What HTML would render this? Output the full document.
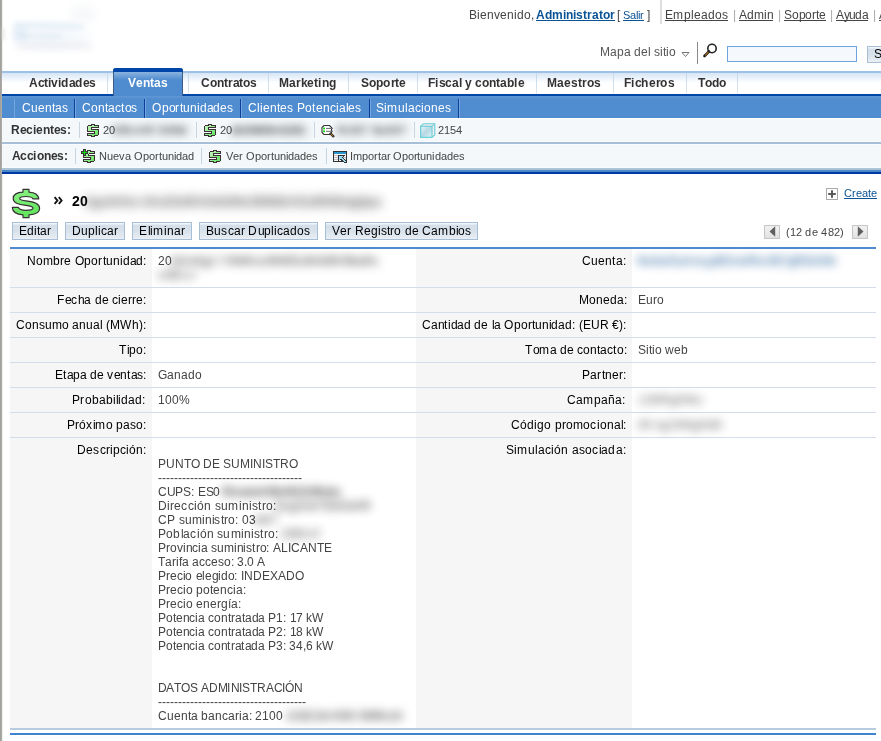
<!DOCTYPE html>
<html><head><meta charset="utf-8"><title>SugarCRM</title>
<style>
html,body{margin:0;padding:0;background:#fff;width:881px;height:741px;overflow:hidden;position:relative}
.t{position:absolute;will-change:transform;font-family:"Liberation Sans",sans-serif;line-height:20px;white-space:pre;font-kerning:none}
.t i{display:inline-block;font-style:normal}
.r{position:absolute}
</style></head><body>
<div class="r" style="left:0px;top:0px;width:1px;height:741px;background:#a2a19d"></div>
<div class="r" style="left:1px;top:0px;width:1px;height:741px;background:#acaba7"></div>
<div class="r" style="left:2px;top:0px;width:1px;height:741px;background:#eeeeec"></div>
<div class="r" style="left:2px;top:28px;width:3px;height:12px;background:rgba(225,225,222,0.6);filter:blur(1.5px)"></div>
<div class="r" style="left:12px;top:18px;width:84px;height:34px;background:radial-gradient(ellipse at 45% 50%, rgba(225,236,245,0.45), rgba(235,242,248,0.3) 55%, rgba(255,255,255,0) 72%);filter:blur(2px);"></div>
<div class="r" style="left:14px;top:23px;width:70px;height:5px;background:rgba(190,215,236,0.3);filter:blur(2.5px);border-radius:3px;transform:rotate(2deg)"></div>
<div class="r" style="left:13px;top:25px;width:14px;height:16px;background:rgba(185,212,234,0.3);filter:blur(3px);border-radius:5px"></div>
<div class="r" style="left:18px;top:34px;width:44px;height:4px;background:rgba(185,212,234,0.25);filter:blur(2.5px);border-radius:3px"></div>
<div class="r" style="left:16px;top:42px;width:76px;height:8px;background:rgba(222,226,232,0.4);filter:blur(3px);border-radius:4px"></div>
<div class="r" style="left:70px;top:6px;width:26px;height:16px;background:rgba(235,240,244,0.45);filter:blur(4px);border-radius:8px"></div>
<div class="t" style="left:469px;top:5px;font-size:12px;color:#444;"><i style="width:8px">B</i><i style="width:3px">i</i><i style="width:7px">e</i><i style="width:7px">n</i><i style="width:6px">v</i><i style="width:7px">e</i><i style="width:7px">n</i><i style="width:3px">i</i><i style="width:7px">d</i><i style="width:7px">o</i><i style="width:3px">,</i></div>
<div class="t" style="left:536px;top:5px;font-size:12px;color:#0b5394;font-weight:bold;"><i style="width:9px">A</i><i style="width:7px">d</i><i style="width:11px">m</i><i style="width:3px">i</i><i style="width:7px">n</i><i style="width:3px">i</i><i style="width:7px">s</i><i style="width:4px">t</i><i style="width:5px">r</i><i style="width:7px">a</i><i style="width:4px">t</i><i style="width:7px">o</i><i style="width:5px">r</i></div>
<div class="r" style="left:536px;top:20px;width:79px;height:1px;background:#0b5394"></div>
<div class="t" style="left:617px;top:5px;font-size:12px;color:#444;"><i style="width:3px">[</i></div>
<div class="t" style="left:623px;top:5px;font-size:11px;color:#0b5394;"><i style="width:7px">S</i><i style="width:6px">a</i><i style="width:2px">l</i><i style="width:2px">i</i><i style="width:4px">r</i></div>
<div class="r" style="left:623px;top:20px;width:21px;height:1px;background:#0b5394"></div>
<div class="t" style="left:647px;top:5px;font-size:12px;color:#444;"><i style="width:3px">]</i></div>
<div class="r" style="left:660px;top:0px;width:2px;height:24px;background:#dedede"></div>
<div class="t" style="left:665px;top:5px;font-size:12px;color:#444;"><i style="width:8px">E</i><i style="width:11px">m</i><i style="width:7px">p</i><i style="width:3px">l</i><i style="width:7px">e</i><i style="width:7px">a</i><i style="width:7px">d</i><i style="width:7px">o</i><i style="width:6px">s</i></div>
<div class="r" style="left:665px;top:20px;width:63px;height:1px;background:#444"></div>
<div class="t" style="left:733px;top:5px;font-size:12px;color:#aaa;"><i style="width:3px">|</i></div>
<div class="t" style="left:739px;top:5px;font-size:12px;color:#444;"><i style="width:8px">A</i><i style="width:7px">d</i><i style="width:10px">m</i><i style="width:3px">i</i><i style="width:6px">n</i></div>
<div class="r" style="left:739px;top:20px;width:34px;height:1px;background:#444"></div>
<div class="t" style="left:778px;top:5px;font-size:12px;color:#aaa;"><i style="width:3px">|</i></div>
<div class="t" style="left:784px;top:5px;font-size:12px;color:#444;"><i style="width:8px">S</i><i style="width:7px">o</i><i style="width:6px">p</i><i style="width:7px">o</i><i style="width:4px">r</i><i style="width:3px">t</i><i style="width:7px">e</i></div>
<div class="r" style="left:784px;top:20px;width:42px;height:1px;background:#444"></div>
<div class="t" style="left:830px;top:5px;font-size:12px;color:#aaa;"><i style="width:3px">|</i></div>
<div class="t" style="left:836px;top:5px;font-size:12px;color:#444;"><i style="width:8px">A</i><i style="width:5px">y</i><i style="width:6px">u</i><i style="width:7px">d</i><i style="width:6px">a</i></div>
<div class="r" style="left:836px;top:20px;width:32px;height:1px;background:#444"></div>
<div class="t" style="left:873px;top:5px;font-size:12px;color:#aaa;"><i style="width:3px">|</i></div>
<div class="t" style="left:879px;top:5px;font-size:12px;color:#444;"><i style="width:8px">A</i><i style="width:6px">c</i><i style="width:7px">e</i><i style="width:4px">r</i><i style="width:6px">c</i><i style="width:7px">a</i><i style="width:3px"> </i><i style="width:7px">d</i><i style="width:7px">e</i></div>
<div class="r" style="left:879px;top:20px;width:55px;height:1px;background:#444"></div>
<div class="t" style="left:600px;top:42px;font-size:12px;color:#555;"><i style="width:10px">M</i><i style="width:7px">a</i><i style="width:7px">p</i><i style="width:7px">a</i><i style="width:3px"> </i><i style="width:7px">d</i><i style="width:7px">e</i><i style="width:3px">l</i><i style="width:3px"> </i><i style="width:6px">s</i><i style="width:3px">i</i><i style="width:3px">t</i><i style="width:3px">i</i><i style="width:7px">o</i></div>
<svg class="r" style="left:681px;top:52px" width="9" height="6" viewBox="0 0 9 6"><path d="M1 0.5 L8 0.5 L4.5 4.5 Z" fill="#fff" stroke="#777" stroke-width="1"/></svg>
<div class="r" style="left:697px;top:42px;width:1px;height:22px;background:#888"></div>
<svg class="r" style="left:703px;top:43px" width="15" height="15" viewBox="0 0 15 15"><circle cx="9" cy="5.5" r="4.2" fill="#fff" stroke="#222" stroke-width="1.6"/><path d="M6 8.5 L1.5 13" stroke="#222" stroke-width="2.6" stroke-linecap="round"/><path d="M5.3 9.2 L2.2 12.3" stroke="#b07010" stroke-width="1.2"/></svg>
<div class="r" style="left:727px;top:46px;width:130px;height:16px;background:#f5f9fd;border:1px solid #6ea4dc;box-sizing:border-box;"></div>
<div class="r" style="left:867px;top:46px;width:20px;height:17px;background:linear-gradient(#f2f5f8 0px,#f2f5f8 1px,#d4dfea 2px,#d8e2ec 8px,#e6ecf2 14px,#f0f3f6 15px);border:1px solid #a6bed6;box-sizing:border-box;"></div>
<div class="t" style="left:874px;top:44px;font-size:12px;color:#000;"><i style="width:8px">S</i></div>
<div class="r" style="left:2px;top:71px;width:879px;height:2px;background:#9cc0e6"></div>
<div class="r" style="left:2px;top:73px;width:879px;height:21px;background:linear-gradient(#d6e5f5 0px,#ffffff 10px,#ffffff 21px)"></div>
<div class="r" style="left:2px;top:94px;width:879px;height:2px;background:#0046a8"></div>
<div class="r" style="left:107px;top:73px;width:1px;height:21px;background:linear-gradient(#c4d8ec,#dbe6f0)"></div>
<div class="r" style="left:188px;top:73px;width:1px;height:21px;background:linear-gradient(#c4d8ec,#dbe6f0)"></div>
<div class="r" style="left:268px;top:73px;width:1px;height:21px;background:linear-gradient(#c4d8ec,#dbe6f0)"></div>
<div class="r" style="left:348px;top:73px;width:1px;height:21px;background:linear-gradient(#c4d8ec,#dbe6f0)"></div>
<div class="r" style="left:417px;top:73px;width:1px;height:21px;background:linear-gradient(#c4d8ec,#dbe6f0)"></div>
<div class="r" style="left:536px;top:73px;width:1px;height:21px;background:linear-gradient(#c4d8ec,#dbe6f0)"></div>
<div class="r" style="left:613px;top:73px;width:1px;height:21px;background:linear-gradient(#c4d8ec,#dbe6f0)"></div>
<div class="r" style="left:686px;top:73px;width:1px;height:21px;background:linear-gradient(#c4d8ec,#dbe6f0)"></div>
<div class="r" style="left:737px;top:73px;width:1px;height:21px;background:linear-gradient(#c4d8ec,#dbe6f0)"></div>
<div class="r" style="left:113px;top:68px;width:70px;height:28px;background:#4f8ccf;border-left:1px solid #3c5d86;border-right:1px solid #3c5d86;border-top-left-radius:3px;border-top-right-radius:3px;box-sizing:border-box"></div>
<div class="r" style="left:113px;top:68px;width:70px;height:4px;background:#0046a8;border-top-left-radius:3px;border-top-right-radius:3px"></div>
<div class="r" style="left:114px;top:72px;width:68px;height:8px;background:linear-gradient(#8ab3e0,#4f8ccf)"></div>
<div class="t" style="left:29px;top:73px;font-size:12px;color:#333;font-weight:bold;"><i style="width:9px">A</i><i style="width:6px">c</i><i style="width:4px">t</i><i style="width:3px">i</i><i style="width:7px">v</i><i style="width:3px">i</i><i style="width:8px">d</i><i style="width:6px">a</i><i style="width:8px">d</i><i style="width:6px">e</i><i style="width:7px">s</i></div>
<div class="t" style="left:201px;top:73px;font-size:12px;color:#333;font-weight:bold;"><i style="width:9px">C</i><i style="width:7px">o</i><i style="width:7px">n</i><i style="width:4px">t</i><i style="width:5px">r</i><i style="width:6px">a</i><i style="width:4px">t</i><i style="width:7px">o</i><i style="width:7px">s</i></div>
<div class="t" style="left:279px;top:73px;font-size:12px;color:#333;font-weight:bold;"><i style="width:10px">M</i><i style="width:7px">a</i><i style="width:5px">r</i><i style="width:6px">k</i><i style="width:7px">e</i><i style="width:4px">t</i><i style="width:4px">i</i><i style="width:7px">n</i><i style="width:8px">g</i></div>
<div class="t" style="left:361px;top:73px;font-size:12px;color:#333;font-weight:bold;"><i style="width:8px">S</i><i style="width:7px">o</i><i style="width:7px">p</i><i style="width:8px">o</i><i style="width:4px">r</i><i style="width:4px">t</i><i style="width:7px">e</i></div>
<div class="t" style="left:428px;top:73px;font-size:12px;color:#333;font-weight:bold;"><i style="width:7px">F</i><i style="width:4px">i</i><i style="width:6px">s</i><i style="width:7px">c</i><i style="width:7px">a</i><i style="width:3px">l</i><i style="width:3px"> </i><i style="width:7px">y</i><i style="width:3px"> </i><i style="width:7px">c</i><i style="width:7px">o</i><i style="width:7px">n</i><i style="width:4px">t</i><i style="width:7px">a</i><i style="width:7px">b</i><i style="width:4px">l</i><i style="width:6px">e</i></div>
<div class="t" style="left:547px;top:73px;font-size:12px;color:#333;font-weight:bold;"><i style="width:10px">M</i><i style="width:7px">a</i><i style="width:7px">e</i><i style="width:7px">s</i><i style="width:4px">t</i><i style="width:5px">r</i><i style="width:7px">o</i><i style="width:7px">s</i></div>
<div class="t" style="left:624px;top:73px;font-size:12px;color:#333;font-weight:bold;"><i style="width:7px">F</i><i style="width:4px">i</i><i style="width:6px">c</i><i style="width:8px">h</i><i style="width:7px">e</i><i style="width:4px">r</i><i style="width:8px">o</i><i style="width:6px">s</i></div>
<div class="t" style="left:698px;top:73px;font-size:12px;color:#333;font-weight:bold;"><i style="width:7px">T</i><i style="width:7px">o</i><i style="width:7px">d</i><i style="width:7px">o</i></div>
<div class="t" style="left:128px;top:73px;font-size:12px;color:#fff;font-weight:bold;"><i style="width:8px">V</i><i style="width:7px">e</i><i style="width:7px">n</i><i style="width:4px">t</i><i style="width:7px">a</i><i style="width:7px">s</i></div>
<div class="r" style="left:2px;top:96px;width:879px;height:22px;background:linear-gradient(#6198d6 0px,#5590d2 2px,#4f8cd0 4px,#4f8cd0 21px,#4a88ce 22px)"></div>
<div class="r" style="left:74px;top:99px;width:1px;height:20px;background:#0a3f9c"></div>
<div class="r" style="left:75px;top:99px;width:1px;height:19px;background:#76a6dc"></div>
<div class="r" style="left:144px;top:99px;width:1px;height:20px;background:#0a3f9c"></div>
<div class="r" style="left:145px;top:99px;width:1px;height:19px;background:#76a6dc"></div>
<div class="r" style="left:240px;top:99px;width:1px;height:20px;background:#0a3f9c"></div>
<div class="r" style="left:241px;top:99px;width:1px;height:19px;background:#76a6dc"></div>
<div class="r" style="left:369px;top:99px;width:1px;height:20px;background:#0a3f9c"></div>
<div class="r" style="left:370px;top:99px;width:1px;height:19px;background:#76a6dc"></div>
<div class="r" style="left:458px;top:99px;width:1px;height:20px;background:#0a3f9c"></div>
<div class="r" style="left:459px;top:99px;width:1px;height:19px;background:#76a6dc"></div>
<div class="r" style="left:14px;top:99px;width:1px;height:20px;background:#76a6dc"></div>
<div class="t" style="left:22px;top:98px;font-size:12px;color:#fff;"><i style="width:9px">C</i><i style="width:7px">u</i><i style="width:7px">e</i><i style="width:7px">n</i><i style="width:3px">t</i><i style="width:7px">a</i><i style="width:6px">s</i></div>
<div class="t" style="left:82px;top:98px;font-size:12px;color:#fff;"><i style="width:9px">C</i><i style="width:7px">o</i><i style="width:7px">n</i><i style="width:3px">t</i><i style="width:7px">a</i><i style="width:6px">c</i><i style="width:4px">t</i><i style="width:6px">o</i><i style="width:7px">s</i></div>
<div class="t" style="left:152px;top:98px;font-size:12px;color:#fff;"><i style="width:10px">O</i><i style="width:7px">p</i><i style="width:6px">o</i><i style="width:5px">r</i><i style="width:3px">t</i><i style="width:7px">u</i><i style="width:7px">n</i><i style="width:3px">i</i><i style="width:7px">d</i><i style="width:6px">a</i><i style="width:7px">d</i><i style="width:7px">e</i><i style="width:7px">s</i></div>
<div class="t" style="left:248px;top:98px;font-size:12px;color:#fff;"><i style="width:9px">C</i><i style="width:3px">l</i><i style="width:3px">i</i><i style="width:7px">e</i><i style="width:7px">n</i><i style="width:3px">t</i><i style="width:7px">e</i><i style="width:6px">s</i><i style="width:4px"> </i><i style="width:8px">P</i><i style="width:7px">o</i><i style="width:4px">t</i><i style="width:7px">e</i><i style="width:7px">n</i><i style="width:6px">c</i><i style="width:3px">i</i><i style="width:7px">a</i><i style="width:2px">l</i><i style="width:7px">e</i><i style="width:7px">s</i></div>
<div class="t" style="left:376px;top:98px;font-size:12px;color:#fff;"><i style="width:8px">S</i><i style="width:3px">i</i><i style="width:11px">m</i><i style="width:7px">u</i><i style="width:3px">l</i><i style="width:7px">a</i><i style="width:6px">c</i><i style="width:3px">i</i><i style="width:7px">o</i><i style="width:7px">n</i><i style="width:7px">e</i><i style="width:6px">s</i></div>
<div class="r" style="left:2px;top:118px;width:879px;height:1px;background:#ffffff"></div>
<div class="r" style="left:2px;top:119px;width:879px;height:23px;background:#f4f8fb"></div>
<div class="r" style="left:2px;top:141px;width:879px;height:1px;background:#f9fbfd"></div>
<div class="r" style="left:2px;top:142px;width:879px;height:2px;background:#a6bfd6"></div>
<div class="r" style="left:2px;top:144px;width:879px;height:1px;background:#f9fbfd"></div>
<div class="r" style="left:2px;top:145px;width:879px;height:23px;background:#f4f8fb"></div>
<div class="r" style="left:2px;top:167px;width:879px;height:1px;background:#f8fafc"></div>
<div class="r" style="left:2px;top:168px;width:879px;height:2px;background:#adc3d6"></div>
<div class="r" style="left:2px;top:170px;width:879px;height:2px;background:#4a88cc"></div>
<div class="r" style="left:2px;top:172px;width:879px;height:2px;background:#0037a2"></div>
<div class="t" style="left:11px;top:120px;font-size:12px;color:#333;font-weight:bold;"><i style="width:9px">R</i><i style="width:6px">e</i><i style="width:7px">c</i><i style="width:3px">i</i><i style="width:7px">e</i><i style="width:7px">n</i><i style="width:4px">t</i><i style="width:6px">e</i><i style="width:7px">s</i><i style="width:4px">:</i></div>
<div class="t" style="left:12px;top:146px;font-size:12px;color:#333;font-weight:bold;"><i style="width:8px">A</i><i style="width:7px">c</i><i style="width:6px">c</i><i style="width:4px">i</i><i style="width:7px">o</i><i style="width:7px">n</i><i style="width:6px">e</i><i style="width:7px">s</i><i style="width:3px">:</i></div>
<div class="r" style="left:79px;top:122px;width:1px;height:16px;background:#c8d6e4"></div>
<div class="r" style="left:196px;top:122px;width:1px;height:16px;background:#c8d6e4"></div>
<div class="r" style="left:314px;top:122px;width:1px;height:16px;background:#c8d6e4"></div>
<div class="r" style="left:414px;top:122px;width:1px;height:16px;background:#c8d6e4"></div>
<div class="r" style="left:75px;top:148px;width:1px;height:16px;background:#c8d6e4"></div>
<div class="r" style="left:201px;top:148px;width:1px;height:16px;background:#c8d6e4"></div>
<div class="r" style="left:326px;top:148px;width:1px;height:16px;background:#c8d6e4"></div>
<svg class="r" style="left:87px;top:124px" width="12" height="13" viewBox="0 0 12 13" shape-rendering="crispEdges"><defs><linearGradient id="pg1" x1="0" y1="0" x2="1" y2="1" gradientUnits="userSpaceOnUse" gradientTransform="scale(12,13)"><stop offset="0" stop-color="#d2f6cb"/><stop offset="0.55" stop-color="#8cee86"/><stop offset="1" stop-color="#55dc50"/></linearGradient></defs><path d="M4 0h4v1h-4zM1 1h4v1h-4zM7 1h5v1h-5zM0 2h1v1h-1zM11 2h1v1h-1zM0 3h1v1h-1zM4 3h8v1h-8zM0 4h1v1h-1zM4 4h1v1h-1zM0 5h1v1h-1zM4 5h8v1h-8zM0 6h1v1h-1zM11 6h1v1h-1zM0 7h8v1h-8zM11 7h1v1h-1zM7 8h1v1h-1zM11 8h1v1h-1zM0 9h8v1h-8zM11 9h1v1h-1zM0 10h1v1h-1zM11 10h1v1h-1zM0 11h5v1h-5zM7 11h4v1h-4zM4 12h4v1h-4z" fill="#3b2f38"/><path d="M5 1h2v1h-2zM1 2h10v1h-10zM1 3h3v1h-3zM1 4h3v1h-3zM1 5h3v1h-3zM1 6h10v1h-10zM8 7h3v1h-3zM8 8h3v1h-3zM8 9h3v1h-3zM1 10h10v1h-10zM5 11h2v1h-2z" fill="url(#pg1)"/></svg>
<div class="t" style="left:103px;top:120px;font-size:11px;color:#444;"><i style="width:6px">2</i><i style="width:6px">0</i></div>
<div class="t" style="left:113px;top:120px;font-size:11px;color:#222;font-weight:bold;filter:blur(4.4px);opacity:0.85;"><i style="width:7px">6</i><i style="width:4px">f</i><i style="width:7px">6</i><i style="width:7px">c</i><i style="width:8px">h</i><i style="width:9px">R</i><i style="width:3px"> </i><i style="width:9px">S</i><i style="width:7px">8</i><i style="width:6px">9</i><i style="width:8px">d</i></div>
<svg class="r" style="left:204px;top:124px" width="12" height="13" viewBox="0 0 12 13" shape-rendering="crispEdges"><defs><linearGradient id="pg2" x1="0" y1="0" x2="1" y2="1" gradientUnits="userSpaceOnUse" gradientTransform="scale(12,13)"><stop offset="0" stop-color="#d2f6cb"/><stop offset="0.55" stop-color="#8cee86"/><stop offset="1" stop-color="#55dc50"/></linearGradient></defs><path d="M4 0h4v1h-4zM1 1h4v1h-4zM7 1h5v1h-5zM0 2h1v1h-1zM11 2h1v1h-1zM0 3h1v1h-1zM4 3h8v1h-8zM0 4h1v1h-1zM4 4h1v1h-1zM0 5h1v1h-1zM4 5h8v1h-8zM0 6h1v1h-1zM11 6h1v1h-1zM0 7h8v1h-8zM11 7h1v1h-1zM7 8h1v1h-1zM11 8h1v1h-1zM0 9h8v1h-8zM11 9h1v1h-1zM0 10h1v1h-1zM11 10h1v1h-1zM0 11h5v1h-5zM7 11h4v1h-4zM4 12h4v1h-4z" fill="#3b2f38"/><path d="M5 1h2v1h-2zM1 2h10v1h-10zM1 3h3v1h-3zM1 4h3v1h-3zM1 5h3v1h-3zM1 6h10v1h-10zM8 7h3v1h-3zM8 8h3v1h-3zM8 9h3v1h-3zM1 10h10v1h-10zM5 11h2v1h-2z" fill="url(#pg2)"/></svg>
<div class="t" style="left:220px;top:120px;font-size:11px;color:#444;"><i style="width:6px">2</i><i style="width:6px">0</i></div>
<div class="t" style="left:231px;top:120px;font-size:11px;color:#222;font-weight:bold;filter:blur(4.4px);opacity:0.85;"><i style="width:6px">d</i><i style="width:7px">b</i><i style="width:6px">5</i><i style="width:7px">N</i><i style="width:6px">6</i><i style="width:7px">N</i><i style="width:7px">h</i><i style="width:6px">4</i><i style="width:5px">1</i><i style="width:6px">2</i><i style="width:6px">8</i><i style="width:6px">1</i></div>
<svg class="r" style="left:321px;top:124px" width="15" height="14" viewBox="0 0 15 14">
<path d="M3 1.5 L8.5 1.5 L10.5 3.5 L10.5 8.5 L8.5 10.5 L3 10.5 L1 8.5 L1 3.5 Z" fill="#fff" stroke="#333" stroke-width="1.1"/>
<rect x="2.2" y="3.6" width="1.8" height="1.8" fill="#0d0"/><rect x="2.2" y="6.4" width="1.8" height="1.8" fill="#0d0"/>
<rect x="5" y="3.9" width="7" height="1.1" fill="#777"/><rect x="5" y="6.8" width="7" height="1.1" fill="#777"/>
<path d="M9 9 L13 13" stroke="#222" stroke-width="2.4"/><path d="M9.6 9.6 L12.4 12.4" stroke="#c8860a" stroke-width="1"/>
</svg>
<div class="t" style="left:337px;top:120px;font-size:11px;color:#222;font-weight:bold;filter:blur(4.4px);opacity:0.85;"><i style="width:4px">f</i><i style="width:8px">h</i><i style="width:6px">3</i><i style="width:7px">3</i><i style="width:7px">7</i><i style="width:4px"> </i><i style="width:6px">8</i><i style="width:7px">s</i><i style="width:7px">6</i><i style="width:7px">9</i><i style="width:7px">7</i></div>
<svg class="r" style="left:420px;top:123px" width="16" height="15" viewBox="0 0 16 15">
<defs><linearGradient id="gc" x1="0" y1="0" x2="1" y2="1"><stop offset="0" stop-color="#e8f6fb"/><stop offset="0.5" stop-color="#b6d8e4"/><stop offset="1" stop-color="#e2f4f8"/></linearGradient></defs>
<path d="M3.5 0.7 L14.8 0.7 L14.8 12 L12 14.3 L0.7 14.3 L0.7 3.3 Z" fill="#f2e8ee" stroke="#66d0d8" stroke-width="1.1"/>
<rect x="0.7" y="3.3" width="11.3" height="11" fill="url(#gc)" stroke="#66d0d8" stroke-width="1.1"/>
<path d="M12 3.3 L14.8 0.7" stroke="#66d0d8" stroke-width="1"/>
</svg>
<div class="t" style="left:438px;top:120px;font-size:11px;color:#444;"><i style="width:6px">2</i><i style="width:6px">1</i><i style="width:6px">5</i><i style="width:6px">4</i></div>
<svg class="r" style="left:80px;top:148px" width="15" height="15" viewBox="0 0 15 15" shape-rendering="crispEdges"><defs><linearGradient id="pg3" x1="0" y1="0" x2="1" y2="1" gradientUnits="userSpaceOnUse" gradientTransform="scale(15,15)"><stop offset="0" stop-color="#d8f8d0"/><stop offset="0.55" stop-color="#98f090"/><stop offset="1" stop-color="#5cde56"/></linearGradient></defs><path d="M3 1h3v1h-3zM3 2h1v1h-1zM5 2h1v1h-1zM7 2h4v1h-4zM1 3h3v1h-3zM5 3h3v1h-3zM10 3h5v1h-5zM1 4h1v1h-1zM7 4h1v1h-1zM14 4h1v1h-1zM1 5h3v1h-3zM5 5h3v1h-3zM9 5h6v1h-6zM3 6h1v1h-1zM5 6h1v1h-1zM8 6h1v1h-1zM3 7h3v1h-3zM8 7h7v1h-7zM3 8h1v1h-1zM14 8h1v1h-1zM3 9h8v1h-8zM14 9h1v1h-1zM10 10h1v1h-1zM14 10h1v1h-1zM3 11h8v1h-8zM14 11h1v1h-1zM3 12h1v1h-1zM14 12h1v1h-1zM3 13h5v1h-5zM10 13h4v1h-4zM7 14h4v1h-4z" fill="#3b2f38"/><path d="M8 3h2v1h-2zM8 4h6v1h-6zM8 5h1v1h-1zM6 6h2v1h-2zM6 7h2v1h-2zM4 8h10v1h-10zM11 9h3v1h-3zM11 10h3v1h-3zM11 11h3v1h-3zM4 12h10v1h-10zM8 13h2v1h-2z" fill="url(#pg3)"/><path d="M4 2h1v1h-1zM4 3h1v1h-1zM2 4h5v1h-5zM4 5h1v1h-1zM4 6h1v1h-1z" fill="#10e010"/></svg>
<div class="t" style="left:99px;top:146px;font-size:11px;color:#444;"><i style="width:8px">N</i><i style="width:6px">u</i><i style="width:6px">e</i><i style="width:6px">v</i><i style="width:6px">a</i><i style="width:3px"> </i><i style="width:9px">O</i><i style="width:6px">p</i><i style="width:6px">o</i><i style="width:4px">r</i><i style="width:3px">t</i><i style="width:6px">u</i><i style="width:6px">n</i><i style="width:2px">i</i><i style="width:6px">d</i><i style="width:6px">a</i><i style="width:6px">d</i></div>
<svg class="r" style="left:209px;top:150px" width="12" height="13" viewBox="0 0 12 13" shape-rendering="crispEdges"><defs><linearGradient id="pg4" x1="0" y1="0" x2="1" y2="1" gradientUnits="userSpaceOnUse" gradientTransform="scale(12,13)"><stop offset="0" stop-color="#d2f6cb"/><stop offset="0.55" stop-color="#8cee86"/><stop offset="1" stop-color="#55dc50"/></linearGradient></defs><path d="M4 0h4v1h-4zM1 1h4v1h-4zM7 1h5v1h-5zM0 2h1v1h-1zM11 2h1v1h-1zM0 3h1v1h-1zM4 3h8v1h-8zM0 4h1v1h-1zM4 4h1v1h-1zM0 5h1v1h-1zM4 5h8v1h-8zM0 6h1v1h-1zM11 6h1v1h-1zM0 7h8v1h-8zM11 7h1v1h-1zM7 8h1v1h-1zM11 8h1v1h-1zM0 9h8v1h-8zM11 9h1v1h-1zM0 10h1v1h-1zM11 10h1v1h-1zM0 11h5v1h-5zM7 11h4v1h-4zM4 12h4v1h-4z" fill="#3b2f38"/><path d="M5 1h2v1h-2zM1 2h10v1h-10zM1 3h3v1h-3zM1 4h3v1h-3zM1 5h3v1h-3zM1 6h10v1h-10zM8 7h3v1h-3zM8 8h3v1h-3zM8 9h3v1h-3zM1 10h10v1h-10zM5 11h2v1h-2z" fill="url(#pg4)"/></svg>
<div class="t" style="left:226px;top:146px;font-size:11px;color:#444;"><i style="width:7px">V</i><i style="width:6px">e</i><i style="width:4px">r</i><i style="width:3px"> </i><i style="width:9px">O</i><i style="width:6px">p</i><i style="width:6px">o</i><i style="width:4px">r</i><i style="width:3px">t</i><i style="width:6px">u</i><i style="width:6px">n</i><i style="width:2px">i</i><i style="width:6px">d</i><i style="width:6px">a</i><i style="width:6px">d</i><i style="width:6px">e</i><i style="width:6px">s</i></div>
<svg class="r" style="left:333px;top:151px" width="14" height="12" viewBox="0 0 14 12" shape-rendering="crispEdges"><path d="M0 0h14v1h-14zM0 1h1v1h-1zM13 1h1v1h-1zM0 2h1v1h-1zM13 2h1v1h-1zM0 3h1v1h-1zM13 3h1v1h-1zM0 4h1v1h-1zM5 4h7v1h-7zM13 4h1v1h-1zM0 5h1v1h-1zM5 5h1v1h-1zM10 5h1v1h-1zM13 5h1v1h-1zM0 6h1v1h-1zM5 6h1v1h-1zM9 6h1v1h-1zM13 6h1v1h-1zM0 7h1v1h-1zM5 7h1v1h-1zM10 7h1v1h-1zM13 7h1v1h-1zM0 8h1v1h-1zM5 8h1v1h-1zM7 8h2v1h-2zM11 8h1v1h-1zM13 8h1v1h-1zM0 9h1v1h-1zM5 9h1v1h-1zM8 9h2v1h-2zM12 9h2v1h-2zM0 10h11v1h-11zM13 10h1v1h-1zM11 11h3v1h-3z" fill="#333333"/><path d="M1 1h12v1h-12zM1 2h12v1h-12z" fill="#2a98cc"/><path d="M1 3h12v1h-12zM12 4h1v1h-1zM1 5h4v1h-4zM11 5h2v1h-2zM1 7h4v1h-4zM11 7h2v1h-2zM1 9h4v1h-4zM6 9h2v1h-2z" fill="#f6f1f3"/><path d="M1 4h4v1h-4zM1 6h4v1h-4zM10 6h3v1h-3zM1 8h4v1h-4zM12 8h1v1h-1z" fill="#c4c4c4"/><path d="M6 5h4v1h-4zM6 6h3v1h-3zM6 7h4v1h-4zM6 8h1v1h-1zM9 8h2v1h-2zM10 9h2v1h-2zM11 10h2v1h-2z" fill="#9adcf4"/></svg>
<div class="t" style="left:350px;top:146px;font-size:11px;color:#444;"><i style="width:3px">I</i><i style="width:9px">m</i><i style="width:6px">p</i><i style="width:6px">o</i><i style="width:4px">r</i><i style="width:3px">t</i><i style="width:6px">a</i><i style="width:3px">r</i><i style="width:3px"> </i><i style="width:9px">O</i><i style="width:6px">p</i><i style="width:6px">o</i><i style="width:3px">r</i><i style="width:3px">t</i><i style="width:6px">u</i><i style="width:6px">n</i><i style="width:3px">i</i><i style="width:6px">d</i><i style="width:6px">a</i><i style="width:6px">d</i><i style="width:6px">e</i><i style="width:5px">s</i></div>
<svg class="r" style="left:11px;top:188px" width="30" height="31" viewBox="-1 -1 30 31">
<defs><linearGradient id="gb" x1="0" y1="0" x2="0.3" y2="1"><stop offset="0" stop-color="#8cf286"/><stop offset="1" stop-color="#62e45c"/></linearGradient></defs>
<path d="M26.8 9.8 H20.9 C20.3 8.3 18 7.5 14 7.5 C10 7.5 7.7 8.2 7.7 9.6 C7.7 11 9.5 11.5 14 11.9 C22.5 12.7 27.6 14.4 27.6 19.4 C27.6 23.6 23 25.5 17 25.8 V28.6 H11 V25.8 C4.8 25.5 0.6 23.2 0.3 18.4 H6.4 C7 20.5 9.5 21.3 14 21.3 C18.5 21.3 21 20.6 21 19 C21 17.4 18.5 16.8 14 16.3 C5.5 15.5 1.2 13.5 1.2 9.4 C1.2 5.4 5 3.4 11 3.1 V0.4 H17 V3.1 C22.5 3.4 26.2 5.2 26.8 9.8 Z" fill="url(#gb)" stroke="#363036" stroke-width="1.2" stroke-linejoin="round"/>
</svg>
<svg class="r" style="left:53px;top:196px" width="11" height="9" viewBox="0 0 11 9"><path d="M1.6 1.2 L4.4 4.5 L1.6 7.8 M5.8 1.2 L8.6 4.5 L5.8 7.8" fill="none" stroke="#111" stroke-width="1.9"/></svg>
<div class="t" style="left:72px;top:191px;font-size:14px;color:#000;font-weight:bold;"><i style="width:8px">2</i><i style="width:7px">0</i></div>
<div class="t" style="left:84px;top:192px;font-size:13px;color:#333;font-weight:bold;filter:blur(5.5px);opacity:0.85;"><i style="width:9px">S</i><i style="width:8px">g</i><i style="width:7px">c</i><i style="width:4px">f</i><i style="width:8px">e</i><i style="width:4px">f</i><i style="width:8px">n</i><i style="width:8px">e</i><i style="width:3px"> </i><i style="width:8px">b</i><i style="width:5px">f</i><i style="width:8px">u</i><i style="width:7px">2</i><i style="width:9px">S</i><i style="width:8px">d</i><i style="width:4px">f</i><i style="width:10px">A</i><i style="width:7px">0</i><i style="width:7px">s</i><i style="width:10px">N</i><i style="width:7px">2</i><i style="width:9px">N</i><i style="width:8px">s</i><i style="width:7px">5</i><i style="width:7px">5</i><i style="width:8px">9</i><i style="width:7px">8</i><i style="width:7px">2</i><i style="width:5px">r</i><i style="width:5px">t</i><i style="width:7px">5</i><i style="width:7px">1</i><i style="width:8px">d</i><i style="width:10px">R</i><i style="width:7px">6</i><i style="width:8px">9</i><i style="width:8px">d</i><i style="width:8px">g</i><i style="width:7px">5</i><i style="width:8px">p</i><i style="width:7px">a</i></div>
<svg class="r" style="left:826px;top:188px" width="12" height="12" viewBox="0 0 12 12">
<rect x="0.5" y="0.5" width="11" height="11" fill="#fdfdfd" stroke="#aaa" stroke-width="1"/>
<path d="M6 2.2V9.8M2.2 6H9.8" stroke="#5a5a5a" stroke-width="2"/>
</svg>
<div class="t" style="left:844px;top:183px;font-size:11px;color:#0b5394;"><i style="width:8px">C</i><i style="width:4px">r</i><i style="width:6px">e</i><i style="width:6px">a</i><i style="width:3px">t</i><i style="width:6px">e</i></div>
<div class="r" style="left:844px;top:198px;width:33px;height:1px;background:#0b5394"></div>
<div class="r" style="left:12px;top:222px;width:46px;height:18px;background:linear-gradient(#f2f5f8 0px,#f2f5f8 1px,#d4dfea 2px,#d8e2ec 8px,#e6ecf2 15px,#f0f3f6 16px);border:1px solid #a6bed6;box-sizing:border-box;"></div>
<div class="t" style="left:19px;top:221px;font-size:12px;color:#000;"><i style="width:8px">E</i><i style="width:7px">d</i><i style="width:3px">i</i><i style="width:3px">t</i><i style="width:7px">a</i><i style="width:4px">r</i></div>
<div class="r" style="left:65px;top:222px;width:60px;height:18px;background:linear-gradient(#f2f5f8 0px,#f2f5f8 1px,#d4dfea 2px,#d8e2ec 8px,#e6ecf2 15px,#f0f3f6 16px);border:1px solid #a6bed6;box-sizing:border-box;"></div>
<div class="t" style="left:72px;top:221px;font-size:12px;color:#000;"><i style="width:9px">D</i><i style="width:7px">u</i><i style="width:7px">p</i><i style="width:3px">l</i><i style="width:3px">i</i><i style="width:6px">c</i><i style="width:7px">a</i><i style="width:4px">r</i></div>
<div class="r" style="left:132px;top:222px;width:60px;height:18px;background:linear-gradient(#f2f5f8 0px,#f2f5f8 1px,#d4dfea 2px,#d8e2ec 8px,#e6ecf2 15px,#f0f3f6 16px);border:1px solid #a6bed6;box-sizing:border-box;"></div>
<div class="t" style="left:139px;top:221px;font-size:12px;color:#000;"><i style="width:9px">E</i><i style="width:2px">l</i><i style="width:3px">i</i><i style="width:11px">m</i><i style="width:3px">i</i><i style="width:7px">n</i><i style="width:7px">a</i><i style="width:4px">r</i></div>
<div class="r" style="left:199px;top:222px;width:119px;height:18px;background:linear-gradient(#f2f5f8 0px,#f2f5f8 1px,#d4dfea 2px,#d8e2ec 8px,#e6ecf2 15px,#f0f3f6 16px);border:1px solid #a6bed6;box-sizing:border-box;"></div>
<div class="t" style="left:206px;top:221px;font-size:12px;color:#000;"><i style="width:8px">B</i><i style="width:7px">u</i><i style="width:7px">s</i><i style="width:6px">c</i><i style="width:7px">a</i><i style="width:4px">r</i><i style="width:3px"> </i><i style="width:10px">D</i><i style="width:6px">u</i><i style="width:7px">p</i><i style="width:3px">l</i><i style="width:3px">i</i><i style="width:6px">c</i><i style="width:7px">a</i><i style="width:7px">d</i><i style="width:7px">o</i><i style="width:6px">s</i></div>
<div class="r" style="left:325px;top:222px;width:153px;height:18px;background:linear-gradient(#f2f5f8 0px,#f2f5f8 1px,#d4dfea 2px,#d8e2ec 8px,#e6ecf2 15px,#f0f3f6 16px);border:1px solid #a6bed6;box-sizing:border-box;"></div>
<div class="t" style="left:332px;top:221px;font-size:12px;color:#000;"><i style="width:8px">V</i><i style="width:7px">e</i><i style="width:4px">r</i><i style="width:4px"> </i><i style="width:9px">R</i><i style="width:7px">e</i><i style="width:7px">g</i><i style="width:3px">i</i><i style="width:6px">s</i><i style="width:3px">t</i><i style="width:4px">r</i><i style="width:7px">o</i><i style="width:4px"> </i><i style="width:7px">d</i><i style="width:7px">e</i><i style="width:3px"> </i><i style="width:9px">C</i><i style="width:7px">a</i><i style="width:11px">m</i><i style="width:7px">b</i><i style="width:2px">i</i><i style="width:7px">o</i><i style="width:6px">s</i></div>
<div class="r" style="left:764px;top:225px;width:16px;height:14px;background:linear-gradient(#f2f2f2,#e2e2e2);border:1px solid #c6c6c6;box-sizing:border-box"></div>
<svg class="r" style="left:769px;top:226px" width="7" height="11" viewBox="0 0 7 11"><path d="M6.2 0.3 V10.7 L0.5 5.5 Z" fill="#606060"/></svg>
<div class="t" style="left:786px;top:222px;font-size:11px;color:#444;"><i style="width:4px">(</i><i style="width:6px">1</i><i style="width:6px">2</i><i style="width:3px"> </i><i style="width:7px">d</i><i style="width:6px">e</i><i style="width:3px"> </i><i style="width:7px">4</i><i style="width:6px">8</i><i style="width:6px">2</i><i style="width:4px">)</i></div>
<div class="r" style="left:852px;top:225px;width:16px;height:14px;background:linear-gradient(#f2f2f2,#e2e2e2);border:1px solid #c6c6c6;box-sizing:border-box"></div>
<svg class="r" style="left:857px;top:226px" width="7" height="11" viewBox="0 0 7 11"><path d="M0.8 0.3 V10.7 L6.5 5.5 Z" fill="#606060"/></svg>
<div class="r" style="left:10px;top:247px;width:866px;height:2px;background:#4f8ad0"></div>
<div class="r" style="left:10px;top:249px;width:142px;height:38px;background:#f6f6f6"></div>
<div class="r" style="left:416px;top:249px;width:216px;height:38px;background:#f6f6f6"></div>
<div class="t" style="left:27px;top:251px;font-size:12px;color:#000;"><i style="width:9px">N</i><i style="width:7px">o</i><i style="width:10px">m</i><i style="width:7px">b</i><i style="width:4px">r</i><i style="width:7px">e</i><i style="width:4px"> </i><i style="width:9px">O</i><i style="width:7px">p</i><i style="width:7px">o</i><i style="width:5px">r</i><i style="width:3px">t</i><i style="width:7px">u</i><i style="width:7px">n</i><i style="width:3px">i</i><i style="width:7px">d</i><i style="width:6px">a</i><i style="width:7px">d</i><i style="width:4px">:</i></div>
<div class="t" style="left:582px;top:251px;font-size:12px;color:#000;"><i style="width:9px">C</i><i style="width:7px">u</i><i style="width:7px">e</i><i style="width:7px">n</i><i style="width:4px">t</i><i style="width:7px">a</i><i style="width:3px">:</i></div>
<div class="r" style="left:10px;top:287px;width:866px;height:1px;background:#d3deea"></div>
<div class="r" style="left:10px;top:288px;width:142px;height:24px;background:#f6f6f6"></div>
<div class="r" style="left:416px;top:288px;width:216px;height:24px;background:#f6f6f6"></div>
<div class="t" style="left:57px;top:290px;font-size:12px;color:#000;"><i style="width:8px">F</i><i style="width:6px">e</i><i style="width:7px">c</i><i style="width:6px">h</i><i style="width:7px">a</i><i style="width:4px"> </i><i style="width:7px">d</i><i style="width:6px">e</i><i style="width:4px"> </i><i style="width:6px">c</i><i style="width:3px">i</i><i style="width:7px">e</i><i style="width:4px">r</i><i style="width:4px">r</i><i style="width:7px">e</i><i style="width:3px">:</i></div>
<div class="t" style="left:579px;top:290px;font-size:12px;color:#000;"><i style="width:10px">M</i><i style="width:7px">o</i><i style="width:7px">n</i><i style="width:7px">e</i><i style="width:7px">d</i><i style="width:7px">a</i><i style="width:3px">:</i></div>
<div class="t" style="left:638px;top:290px;font-size:12px;color:#444;"><i style="width:8px">E</i><i style="width:7px">u</i><i style="width:4px">r</i><i style="width:7px">o</i></div>
<div class="r" style="left:10px;top:312px;width:866px;height:1px;background:#d3deea"></div>
<div class="r" style="left:10px;top:313px;width:142px;height:24px;background:#f6f6f6"></div>
<div class="r" style="left:416px;top:313px;width:216px;height:24px;background:#f6f6f6"></div>
<div class="t" style="left:16px;top:315px;font-size:12px;color:#000;"><i style="width:9px">C</i><i style="width:7px">o</i><i style="width:7px">n</i><i style="width:6px">s</i><i style="width:7px">u</i><i style="width:10px">m</i><i style="width:7px">o</i><i style="width:3px"> </i><i style="width:7px">a</i><i style="width:7px">n</i><i style="width:7px">u</i><i style="width:7px">a</i><i style="width:2px">l</i><i style="width:4px"> </i><i style="width:4px">(</i><i style="width:10px">M</i><i style="width:12px">W</i><i style="width:7px">h</i><i style="width:4px">)</i><i style="width:3px">:</i></div>
<div class="t" style="left:422px;top:315px;font-size:12px;color:#000;"><i style="width:9px">C</i><i style="width:7px">a</i><i style="width:6px">n</i><i style="width:4px">t</i><i style="width:3px">i</i><i style="width:6px">d</i><i style="width:7px">a</i><i style="width:7px">d</i><i style="width:3px"> </i><i style="width:7px">d</i><i style="width:7px">e</i><i style="width:4px"> </i><i style="width:2px">l</i><i style="width:7px">a</i><i style="width:3px"> </i><i style="width:10px">O</i><i style="width:7px">p</i><i style="width:7px">o</i><i style="width:4px">r</i><i style="width:3px">t</i><i style="width:7px">u</i><i style="width:7px">n</i><i style="width:2px">i</i><i style="width:7px">d</i><i style="width:7px">a</i><i style="width:7px">d</i><i style="width:3px">:</i><i style="width:4px"> </i><i style="width:4px">(</i><i style="width:8px">E</i><i style="width:9px">U</i><i style="width:9px">R</i><i style="width:3px"> </i><i style="width:7px">€</i><i style="width:4px">)</i><i style="width:3px">:</i></div>
<div class="r" style="left:10px;top:337px;width:866px;height:1px;background:#d3deea"></div>
<div class="r" style="left:10px;top:338px;width:142px;height:24px;background:#f6f6f6"></div>
<div class="r" style="left:416px;top:338px;width:216px;height:24px;background:#f6f6f6"></div>
<div class="t" style="left:119px;top:340px;font-size:12px;color:#000;"><i style="width:8px">T</i><i style="width:2px">i</i><i style="width:7px">p</i><i style="width:7px">o</i><i style="width:3px">:</i></div>
<div class="t" style="left:525px;top:340px;font-size:12px;color:#000;"><i style="width:8px">T</i><i style="width:6px">o</i><i style="width:11px">m</i><i style="width:6px">a</i><i style="width:4px"> </i><i style="width:7px">d</i><i style="width:7px">e</i><i style="width:3px"> </i><i style="width:6px">c</i><i style="width:7px">o</i><i style="width:7px">n</i><i style="width:3px">t</i><i style="width:7px">a</i><i style="width:6px">c</i><i style="width:4px">t</i><i style="width:7px">o</i><i style="width:3px">:</i></div>
<div class="t" style="left:638px;top:340px;font-size:12px;color:#444;"><i style="width:8px">S</i><i style="width:3px">i</i><i style="width:3px">t</i><i style="width:3px">i</i><i style="width:7px">o</i><i style="width:3px"> </i><i style="width:9px">w</i><i style="width:7px">e</i><i style="width:7px">b</i></div>
<div class="r" style="left:10px;top:362px;width:866px;height:1px;background:#d3deea"></div>
<div class="r" style="left:10px;top:363px;width:142px;height:24px;background:#f6f6f6"></div>
<div class="r" style="left:416px;top:363px;width:216px;height:24px;background:#f6f6f6"></div>
<div class="t" style="left:55px;top:365px;font-size:12px;color:#000;"><i style="width:8px">E</i><i style="width:4px">t</i><i style="width:6px">a</i><i style="width:7px">p</i><i style="width:7px">a</i><i style="width:3px"> </i><i style="width:7px">d</i><i style="width:7px">e</i><i style="width:3px"> </i><i style="width:7px">v</i><i style="width:6px">e</i><i style="width:7px">n</i><i style="width:4px">t</i><i style="width:6px">a</i><i style="width:6px">s</i><i style="width:4px">:</i></div>
<div class="t" style="left:582px;top:365px;font-size:12px;color:#000;"><i style="width:8px">P</i><i style="width:7px">a</i><i style="width:5px">r</i><i style="width:3px">t</i><i style="width:7px">n</i><i style="width:7px">e</i><i style="width:4px">r</i><i style="width:4px">:</i></div>
<div class="t" style="left:158px;top:365px;font-size:12px;color:#444;"><i style="width:9px">G</i><i style="width:7px">a</i><i style="width:7px">n</i><i style="width:7px">a</i><i style="width:7px">d</i><i style="width:7px">o</i></div>
<div class="r" style="left:10px;top:387px;width:866px;height:1px;background:#d3deea"></div>
<div class="r" style="left:10px;top:388px;width:142px;height:24px;background:#f6f6f6"></div>
<div class="r" style="left:416px;top:388px;width:216px;height:24px;background:#f6f6f6"></div>
<div class="t" style="left:72px;top:390px;font-size:12px;color:#000;"><i style="width:8px">P</i><i style="width:5px">r</i><i style="width:7px">o</i><i style="width:7px">b</i><i style="width:7px">a</i><i style="width:7px">b</i><i style="width:3px">i</i><i style="width:2px">l</i><i style="width:3px">i</i><i style="width:7px">d</i><i style="width:7px">a</i><i style="width:7px">d</i><i style="width:4px">:</i></div>
<div class="t" style="left:567px;top:390px;font-size:12px;color:#000;"><i style="width:9px">C</i><i style="width:7px">a</i><i style="width:11px">m</i><i style="width:7px">p</i><i style="width:7px">a</i><i style="width:7px">ñ</i><i style="width:7px">a</i><i style="width:4px">:</i></div>
<div class="t" style="left:158px;top:390px;font-size:12px;color:#444;"><i style="width:7px">1</i><i style="width:7px">0</i><i style="width:7px">0</i><i style="width:11px">%</i></div>
<div class="r" style="left:10px;top:412px;width:866px;height:1px;background:#d3deea"></div>
<div class="r" style="left:10px;top:413px;width:142px;height:24px;background:#f6f6f6"></div>
<div class="r" style="left:416px;top:413px;width:216px;height:24px;background:#f6f6f6"></div>
<div class="t" style="left:67px;top:415px;font-size:12px;color:#000;"><i style="width:8px">P</i><i style="width:4px">r</i><i style="width:7px">ó</i><i style="width:7px">x</i><i style="width:2px">i</i><i style="width:11px">m</i><i style="width:7px">o</i><i style="width:3px"> </i><i style="width:7px">p</i><i style="width:7px">a</i><i style="width:6px">s</i><i style="width:7px">o</i><i style="width:4px">:</i></div>
<div class="t" style="left:511px;top:415px;font-size:12px;color:#000;"><i style="width:9px">C</i><i style="width:7px">ó</i><i style="width:7px">d</i><i style="width:3px">i</i><i style="width:7px">g</i><i style="width:7px">o</i><i style="width:4px"> </i><i style="width:7px">p</i><i style="width:4px">r</i><i style="width:7px">o</i><i style="width:10px">m</i><i style="width:7px">o</i><i style="width:7px">c</i><i style="width:3px">i</i><i style="width:7px">o</i><i style="width:7px">n</i><i style="width:7px">a</i><i style="width:2px">l</i><i style="width:4px">:</i></div>
<div class="r" style="left:10px;top:437px;width:866px;height:1px;background:#d3deea"></div>
<div class="r" style="left:10px;top:438px;width:142px;height:290px;background:#f6f6f6"></div>
<div class="r" style="left:416px;top:438px;width:216px;height:290px;background:#f6f6f6"></div>
<div class="t" style="left:77px;top:440px;font-size:12px;color:#000;"><i style="width:9px">D</i><i style="width:7px">e</i><i style="width:7px">s</i><i style="width:6px">c</i><i style="width:4px">r</i><i style="width:3px">i</i><i style="width:7px">p</i><i style="width:6px">c</i><i style="width:3px">i</i><i style="width:7px">ó</i><i style="width:7px">n</i><i style="width:4px">:</i></div>
<div class="t" style="left:506px;top:440px;font-size:12px;color:#000;"><i style="width:8px">S</i><i style="width:3px">i</i><i style="width:11px">m</i><i style="width:7px">u</i><i style="width:3px">l</i><i style="width:7px">a</i><i style="width:6px">c</i><i style="width:3px">i</i><i style="width:7px">ó</i><i style="width:7px">n</i><i style="width:4px"> </i><i style="width:7px">a</i><i style="width:6px">s</i><i style="width:7px">o</i><i style="width:7px">c</i><i style="width:2px">i</i><i style="width:7px">a</i><i style="width:8px">d</i><i style="width:7px">a</i><i style="width:3px">:</i></div>
<div class="t" style="left:158px;top:251px;font-size:12px;color:#444;"><i style="width:7px">2</i><i style="width:7px">0</i></div>
<div class="t" style="left:171px;top:251px;font-size:12px;color:#222;filter:blur(4.6px);opacity:1;"><i style="width:7px">h</i><i style="width:9px">A</i><i style="width:7px">n</i><i style="width:8px">4</i><i style="width:7px">g</i><i style="width:7px">1</i><i style="width:4px"> </i><i style="width:3px">f</i><i style="width:4px"> </i><i style="width:4px">t</i><i style="width:9px">N</i><i style="width:7px">4</i><i style="width:8px">h</i><i style="width:6px">c</i><i style="width:7px">c</i><i style="width:7px">6</i><i style="width:7px">h</i><i style="width:8px">6</i><i style="width:8px">E</i><i style="width:7px">s</i><i style="width:7px">8</i><i style="width:9px">A</i><i style="width:7px">b</i><i style="width:7px">5</i><i style="width:8px">h</i><i style="width:7px">5</i><i style="width:7px">b</i><i style="width:7px">o</i><i style="width:8px">8</i><i style="width:6px">s</i></div>
<div class="t" style="left:158px;top:265px;font-size:12px;color:#222;filter:blur(4.6px);opacity:0.95;"><i style="width:8px">s</i><i style="width:8px">6</i><i style="width:10px">E</i><i style="width:8px">c</i><i style="width:5px">r</i></div>
<div class="t" style="left:637px;top:251px;font-size:12px;color:#3a6fa6;font-weight:bold;filter:blur(4.6px);opacity:0.8;"><i style="width:8px">N</i><i style="width:7px">u</i><i style="width:7px">S</i><i style="width:7px">a</i><i style="width:6px">0</i><i style="width:6px">1</i><i style="width:6px">a</i><i style="width:9px">A</i><i style="width:6px">n</i><i style="width:7px">c</i><i style="width:7px">g</i><i style="width:6px">4</i><i style="width:7px">E</i><i style="width:7px">2</i><i style="width:6px">n</i><i style="width:7px">u</i><i style="width:8px">R</i><i style="width:7px">h</i><i style="width:7px">c</i><i style="width:6px">0</i><i style="width:7px">E</i><i style="width:7px">7</i><i style="width:6px">g</i><i style="width:9px">R</i><i style="width:7px">E</i><i style="width:7px">d</i><i style="width:6px">1</i><i style="width:6px">0</i><i style="width:7px">b</i></div>
<div class="t" style="left:638px;top:390px;font-size:12px;color:#222;filter:blur(4.6px);opacity:0.7;"><i style="width:7px">1</i><i style="width:6px">2</i><i style="width:10px">M</i><i style="width:9px">R</i><i style="width:6px">g</i><i style="width:7px">0</i><i style="width:6px">h</i><i style="width:7px">6</i><i style="width:6px">o</i></div>
<div class="t" style="left:638px;top:415px;font-size:12px;color:#222;filter:blur(4.6px);opacity:0.7;"><i style="width:7px">8</i><i style="width:6px">9</i><i style="width:4px"> </i><i style="width:6px">n</i><i style="width:7px">g</i><i style="width:7px">2</i><i style="width:10px">M</i><i style="width:7px">9</i><i style="width:6px">g</i><i style="width:4px">f</i><i style="width:4px">r</i><i style="width:6px">b</i><i style="width:11px">M</i></div>
<div class="t" style="left:158px;top:454px;font-size:12px;color:#444;"><i style="width:8px">P</i><i style="width:9px">U</i><i style="width:9px">N</i><i style="width:7px">T</i><i style="width:9px">O</i><i style="width:3px"> </i><i style="width:9px">D</i><i style="width:8px">E</i><i style="width:3px"> </i><i style="width:8px">S</i><i style="width:9px">U</i><i style="width:10px">M</i><i style="width:3px">I</i><i style="width:9px">N</i><i style="width:3px">I</i><i style="width:8px">S</i><i style="width:7px">T</i><i style="width:9px">R</i><i style="width:9px">O</i></div>
<div class="t" style="left:158px;top:468px;font-size:12px;color:#444;"><i style="width:4px">-</i><i style="width:4px">-</i><i style="width:4px">-</i><i style="width:4px">-</i><i style="width:4px">-</i><i style="width:4px">-</i><i style="width:4px">-</i><i style="width:4px">-</i><i style="width:4px">-</i><i style="width:4px">-</i><i style="width:4px">-</i><i style="width:4px">-</i><i style="width:4px">-</i><i style="width:4px">-</i><i style="width:4px">-</i><i style="width:4px">-</i><i style="width:4px">-</i><i style="width:4px">-</i><i style="width:4px">-</i><i style="width:4px">-</i><i style="width:4px">-</i><i style="width:4px">-</i><i style="width:4px">-</i><i style="width:4px">-</i><i style="width:4px">-</i><i style="width:4px">-</i><i style="width:4px">-</i><i style="width:4px">-</i><i style="width:4px">-</i><i style="width:4px">-</i><i style="width:4px">-</i><i style="width:4px">-</i><i style="width:4px">-</i><i style="width:4px">-</i><i style="width:4px">-</i><i style="width:4px">-</i></div>
<div class="t" style="left:158px;top:482px;font-size:12px;color:#444;"><i style="width:9px">C</i><i style="width:8px">U</i><i style="width:8px">P</i><i style="width:8px">S</i><i style="width:3px">:</i><i style="width:4px"> </i><i style="width:8px">E</i><i style="width:7px">S</i><i style="width:7px">0</i></div>
<div class="t" style="left:158px;top:496px;font-size:12px;color:#444;"><i style="width:9px">D</i><i style="width:3px">i</i><i style="width:4px">r</i><i style="width:7px">e</i><i style="width:7px">c</i><i style="width:6px">c</i><i style="width:3px">i</i><i style="width:7px">ó</i><i style="width:7px">n</i><i style="width:4px"> </i><i style="width:6px">s</i><i style="width:7px">u</i><i style="width:11px">m</i><i style="width:3px">i</i><i style="width:7px">n</i><i style="width:3px">i</i><i style="width:6px">s</i><i style="width:4px">t</i><i style="width:4px">r</i><i style="width:7px">o</i><i style="width:4px">:</i></div>
<div class="t" style="left:158px;top:510px;font-size:12px;color:#444;"><i style="width:9px">C</i><i style="width:8px">P</i><i style="width:4px"> </i><i style="width:6px">s</i><i style="width:7px">u</i><i style="width:10px">m</i><i style="width:3px">i</i><i style="width:7px">n</i><i style="width:2px">i</i><i style="width:7px">s</i><i style="width:3px">t</i><i style="width:4px">r</i><i style="width:7px">o</i><i style="width:3px">:</i><i style="width:4px"> </i><i style="width:7px">0</i><i style="width:7px">3</i></div>
<div class="t" style="left:158px;top:524px;font-size:12px;color:#444;"><i style="width:8px">P</i><i style="width:7px">o</i><i style="width:8px">b</i><i style="width:2px">l</i><i style="width:7px">a</i><i style="width:7px">c</i><i style="width:3px">i</i><i style="width:7px">ó</i><i style="width:7px">n</i><i style="width:3px"> </i><i style="width:6px">s</i><i style="width:8px">u</i><i style="width:10px">m</i><i style="width:3px">i</i><i style="width:7px">n</i><i style="width:3px">i</i><i style="width:6px">s</i><i style="width:4px">t</i><i style="width:4px">r</i><i style="width:7px">o</i><i style="width:3px">:</i></div>
<div class="t" style="left:158px;top:538px;font-size:12px;color:#444;"><i style="width:8px">P</i><i style="width:4px">r</i><i style="width:7px">o</i><i style="width:6px">v</i><i style="width:3px">i</i><i style="width:6px">n</i><i style="width:6px">c</i><i style="width:3px">i</i><i style="width:7px">a</i><i style="width:3px"> </i><i style="width:6px">s</i><i style="width:7px">u</i><i style="width:10px">m</i><i style="width:3px">i</i><i style="width:6px">n</i><i style="width:3px">i</i><i style="width:6px">s</i><i style="width:4px">t</i><i style="width:4px">r</i><i style="width:6px">o</i><i style="width:4px">:</i><i style="width:3px"> </i><i style="width:8px">A</i><i style="width:7px">L</i><i style="width:3px">I</i><i style="width:9px">C</i><i style="width:8px">A</i><i style="width:9px">N</i><i style="width:7px">T</i><i style="width:8px">E</i></div>
<div class="t" style="left:158px;top:552px;font-size:12px;color:#444;"><i style="width:7px">T</i><i style="width:7px">a</i><i style="width:4px">r</i><i style="width:3px">i</i><i style="width:3px">f</i><i style="width:7px">a</i><i style="width:3px"> </i><i style="width:7px">a</i><i style="width:6px">c</i><i style="width:6px">c</i><i style="width:7px">e</i><i style="width:6px">s</i><i style="width:7px">o</i><i style="width:3px">:</i><i style="width:3px"> </i><i style="width:7px">3</i><i style="width:3px">.</i><i style="width:7px">0</i><i style="width:3px"> </i><i style="width:8px">A</i></div>
<div class="t" style="left:158px;top:566px;font-size:12px;color:#444;"><i style="width:8px">P</i><i style="width:4px">r</i><i style="width:7px">e</i><i style="width:6px">c</i><i style="width:2px">i</i><i style="width:7px">o</i><i style="width:4px"> </i><i style="width:6px">e</i><i style="width:3px">l</i><i style="width:7px">e</i><i style="width:6px">g</i><i style="width:3px">i</i><i style="width:7px">d</i><i style="width:6px">o</i><i style="width:4px">:</i><i style="width:3px"> </i><i style="width:3px">I</i><i style="width:9px">N</i><i style="width:9px">D</i><i style="width:8px">E</i><i style="width:8px">X</i><i style="width:8px">A</i><i style="width:9px">D</i><i style="width:9px">O</i></div>
<div class="t" style="left:158px;top:580px;font-size:12px;color:#444;"><i style="width:8px">P</i><i style="width:4px">r</i><i style="width:7px">e</i><i style="width:6px">c</i><i style="width:3px">i</i><i style="width:7px">o</i><i style="width:3px"> </i><i style="width:7px">p</i><i style="width:7px">o</i><i style="width:3px">t</i><i style="width:7px">e</i><i style="width:7px">n</i><i style="width:6px">c</i><i style="width:3px">i</i><i style="width:7px">a</i><i style="width:3px">:</i></div>
<div class="t" style="left:158px;top:594px;font-size:12px;color:#444;"><i style="width:8px">P</i><i style="width:4px">r</i><i style="width:7px">e</i><i style="width:6px">c</i><i style="width:3px">i</i><i style="width:7px">o</i><i style="width:3px"> </i><i style="width:7px">e</i><i style="width:7px">n</i><i style="width:7px">e</i><i style="width:4px">r</i><i style="width:7px">g</i><i style="width:3px">í</i><i style="width:7px">a</i><i style="width:3px">:</i></div>
<div class="t" style="left:158px;top:608px;font-size:12px;color:#444;"><i style="width:8px">P</i><i style="width:7px">o</i><i style="width:3px">t</i><i style="width:7px">e</i><i style="width:6px">n</i><i style="width:6px">c</i><i style="width:3px">i</i><i style="width:7px">a</i><i style="width:3px"> </i><i style="width:6px">c</i><i style="width:7px">o</i><i style="width:7px">n</i><i style="width:3px">t</i><i style="width:4px">r</i><i style="width:7px">a</i><i style="width:3px">t</i><i style="width:7px">a</i><i style="width:6px">d</i><i style="width:7px">a</i><i style="width:3px"> </i><i style="width:8px">P</i><i style="width:7px">1</i><i style="width:3px">:</i><i style="width:4px"> </i><i style="width:6px">1</i><i style="width:7px">7</i><i style="width:3px"> </i><i style="width:6px">k</i><i style="width:12px">W</i></div>
<div class="t" style="left:158px;top:622px;font-size:12px;color:#444;"><i style="width:8px">P</i><i style="width:7px">o</i><i style="width:3px">t</i><i style="width:7px">e</i><i style="width:6px">n</i><i style="width:6px">c</i><i style="width:3px">i</i><i style="width:7px">a</i><i style="width:3px"> </i><i style="width:6px">c</i><i style="width:7px">o</i><i style="width:7px">n</i><i style="width:3px">t</i><i style="width:4px">r</i><i style="width:7px">a</i><i style="width:3px">t</i><i style="width:7px">a</i><i style="width:6px">d</i><i style="width:7px">a</i><i style="width:3px"> </i><i style="width:8px">P</i><i style="width:7px">2</i><i style="width:3px">:</i><i style="width:4px"> </i><i style="width:6px">1</i><i style="width:7px">8</i><i style="width:3px"> </i><i style="width:6px">k</i><i style="width:12px">W</i></div>
<div class="t" style="left:158px;top:636px;font-size:12px;color:#444;"><i style="width:8px">P</i><i style="width:7px">o</i><i style="width:3px">t</i><i style="width:7px">e</i><i style="width:6px">n</i><i style="width:6px">c</i><i style="width:3px">i</i><i style="width:7px">a</i><i style="width:3px"> </i><i style="width:6px">c</i><i style="width:7px">o</i><i style="width:6px">n</i><i style="width:4px">t</i><i style="width:4px">r</i><i style="width:6px">a</i><i style="width:4px">t</i><i style="width:6px">a</i><i style="width:7px">d</i><i style="width:7px">a</i><i style="width:3px"> </i><i style="width:8px">P</i><i style="width:7px">3</i><i style="width:3px">:</i><i style="width:3px"> </i><i style="width:7px">3</i><i style="width:7px">4</i><i style="width:3px">,</i><i style="width:7px">6</i><i style="width:3px"> </i><i style="width:6px">k</i><i style="width:12px">W</i></div>
<div class="t" style="left:158px;top:678px;font-size:12px;color:#444;"><i style="width:8px">D</i><i style="width:8px">A</i><i style="width:7px">T</i><i style="width:9px">O</i><i style="width:8px">S</i><i style="width:3px"> </i><i style="width:8px">A</i><i style="width:9px">D</i><i style="width:9px">M</i><i style="width:4px">I</i><i style="width:8px">N</i><i style="width:3px">I</i><i style="width:8px">S</i><i style="width:7px">T</i><i style="width:9px">R</i><i style="width:8px">A</i><i style="width:8px">C</i><i style="width:3px">I</i><i style="width:9px">Ó</i><i style="width:9px">N</i></div>
<div class="t" style="left:158px;top:692px;font-size:12px;color:#444;"><i style="width:4px">-</i><i style="width:4px">-</i><i style="width:4px">-</i><i style="width:4px">-</i><i style="width:4px">-</i><i style="width:4px">-</i><i style="width:4px">-</i><i style="width:4px">-</i><i style="width:4px">-</i><i style="width:4px">-</i><i style="width:4px">-</i><i style="width:4px">-</i><i style="width:4px">-</i><i style="width:4px">-</i><i style="width:4px">-</i><i style="width:4px">-</i><i style="width:4px">-</i><i style="width:4px">-</i><i style="width:4px">-</i><i style="width:4px">-</i><i style="width:4px">-</i><i style="width:4px">-</i><i style="width:4px">-</i><i style="width:4px">-</i><i style="width:4px">-</i><i style="width:4px">-</i><i style="width:4px">-</i><i style="width:4px">-</i><i style="width:4px">-</i><i style="width:4px">-</i><i style="width:4px">-</i><i style="width:4px">-</i><i style="width:4px">-</i><i style="width:4px">-</i><i style="width:4px">-</i><i style="width:4px">-</i><i style="width:4px">-</i></div>
<div class="t" style="left:158px;top:706px;font-size:12px;color:#444;"><i style="width:9px">C</i><i style="width:7px">u</i><i style="width:7px">e</i><i style="width:7px">n</i><i style="width:3px">t</i><i style="width:7px">a</i><i style="width:3px"> </i><i style="width:7px">b</i><i style="width:7px">a</i><i style="width:7px">n</i><i style="width:6px">c</i><i style="width:7px">a</i><i style="width:4px">r</i><i style="width:3px">i</i><i style="width:7px">a</i><i style="width:3px">:</i><i style="width:3px"> </i><i style="width:7px">2</i><i style="width:7px">1</i><i style="width:7px">0</i><i style="width:7px">0</i></div>
<div class="t" style="left:222px;top:482px;font-size:12px;color:#222;font-weight:bold;filter:blur(4.6px);opacity:0.9;"><i style="width:4px">f</i><i style="width:8px">3</i><i style="width:8px">n</i><i style="width:7px">a</i><i style="width:5px">t</i><i style="width:7px">e</i><i style="width:5px">t</i><i style="width:7px">3</i><i style="width:4px">f</i><i style="width:8px">e</i><i style="width:9px">N</i><i style="width:8px">3</i><i style="width:9px">S</i><i style="width:4px">t</i><i style="width:10px">N</i><i style="width:8px">d</i><i style="width:8px">u</i></div>
<div class="t" style="left:276px;top:496px;font-size:12px;color:#222;filter:blur(4.6px);opacity:0.9;"><i style="width:7px">8</i><i style="width:7px">u</i><i style="width:7px">g</i><i style="width:8px">S</i><i style="width:6px">s</i><i style="width:3px">t</i><i style="width:4px">r</i><i style="width:7px">7</i><i style="width:8px">E</i><i style="width:7px">b</i><i style="width:7px">0</i><i style="width:7px">d</i><i style="width:8px">A</i><i style="width:9px">R</i></div>
<div class="t" style="left:255px;top:510px;font-size:12px;color:#222;filter:blur(4.6px);opacity:0.9;"><i style="width:8px">d</i><i style="width:8px">8</i><i style="width:8px">7</i></div>
<div class="t" style="left:281px;top:524px;font-size:12px;color:#222;filter:blur(4.6px);opacity:0.9;"><i style="width:8px">2</i><i style="width:11px">M</i><i style="width:8px">h</i><i style="width:8px">1</i><i style="width:4px">f</i></div>
<div class="t" style="left:286px;top:706px;font-size:12px;color:#222;filter:blur(4.6px);opacity:1;"><i style="width:6px">c</i><i style="width:7px">3</i><i style="width:6px">1</i><i style="width:9px">E</i><i style="width:6px">2</i><i style="width:4px">r</i><i style="width:7px">d</i><i style="width:3px"> </i><i style="width:7px">6</i><i style="width:7px">0</i><i style="width:7px">6</i><i style="width:3px"> </i><i style="width:8px">S</i><i style="width:10px">M</i><i style="width:7px">9</i><i style="width:6px">c</i><i style="width:6px">1</i><i style="width:9px">A</i></div>
<div class="r" style="left:10px;top:728px;width:866px;height:2px;background:#b8cce0"></div>
<div class="r" style="left:10px;top:733px;width:866px;height:2px;background:#3f84d0"></div>
</body></html>
